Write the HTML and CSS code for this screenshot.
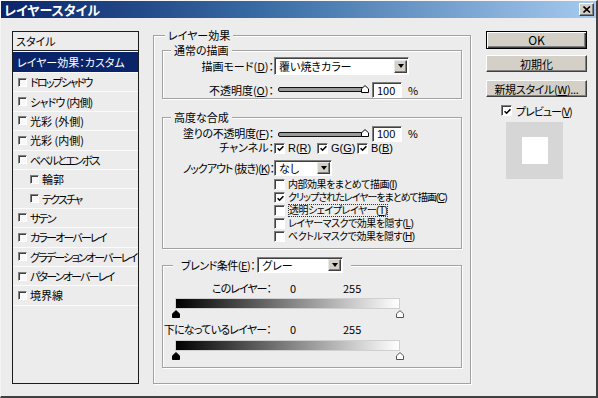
FILE: index.html
```html
<!DOCTYPE html>
<html lang="ja">
<head>
<meta charset="utf-8">
<title>レイヤースタイル</title>
<link rel="stylesheet" href="styles.css">
</head>
<body>
<div class="window">
  <div class="titlebar">
    <span class="title">レイヤースタイル</span>
    <span class="close"><svg width="8" height="7" viewBox="0 0 8 7"><path d="M0.5 0.5 L7 6.5 M7 0.5 L0.5 6.5" stroke="#000" stroke-width="1.6"/></svg></span>
  </div>
  <div class="main">
    <div class="stylelist">
      <div class="list-head">スタイル</div>
      <div class="item selected">レイヤー効果：カスタム</div>
      <div class="item"><span class="cb small"></span><span class="k2">ドロップシャドウ</span></div>
      <div class="item"><span class="cb small"></span><span class="k08">シャドウ (内側)</span></div>
      <div class="item"><span class="cb small"></span>光彩 (外側)</div>
      <div class="item"><span class="cb small"></span>光彩 (内側)</div>
      <div class="item"><span class="cb small"></span><span class="k2">ベベルとエンボス</span></div>
      <div class="item sub"><span class="cb small"></span>輪郭</div>
      <div class="item sub"><span class="cb small"></span><span class="k2">テクスチャ</span></div>
      <div class="item"><span class="cb small"></span><span class="k2">サテン</span></div>
      <div class="item"><span class="cb small"></span><span class="k2">カラーオーバーレイ</span></div>
      <div class="item"><span class="cb small"></span><span class="k2">グラデーションオーバーレイ</span></div>
      <div class="item"><span class="cb small"></span><span class="k2">パターンオーバーレイ</span></div>
      <div class="item last"><span class="cb small"></span>境界線</div>
    </div>

    <fieldset class="group outer">
      <legend>レイヤー効果</legend>

      <fieldset class="group inner g1">
        <legend>通常の描画</legend>
        <div class="row r-mode">
          <span class="lbl">描画モード(<u>D</u>)：</span>
          <div class="sel sel-mode"><span>覆い焼きカラー</span><span class="dd"><i></i></span></div>
        </div>
        <div class="row r-op">
          <span class="lbl">不透明度(<u>O</u>)：</span>
          <div class="slider"><span class="track"></span><svg class="thumb" width="8" height="8" viewBox="0 0 8 8"><path d="M0.5 7.5 V3.8 L4 0.6 L7.5 3.8 V7.5 Z" fill="#fff" stroke="#000"/></svg></div>
          <span class="num">100</span>
          <span class="pct">%</span>
        </div>
      </fieldset>

      <fieldset class="group inner g2">
        <legend>高度な合成</legend>
        <div class="row r-fill">
          <span class="lbl k03">塗りの不透明度(<u>F</u>)：</span>
          <div class="slider"><span class="track"></span><svg class="thumb" width="8" height="8" viewBox="0 0 8 8"><path d="M0.5 7.5 V3.8 L4 0.6 L7.5 3.8 V7.5 Z" fill="#fff" stroke="#000"/></svg></div>
          <span class="num">100</span>
          <span class="pct">%</span>
        </div>
        <div class="row r-ch">
          <span class="lbl">チャンネル：</span>
          <span class="chk c-r"><span class="cb on"><svg width="7" height="7" viewBox="0 0 7 7"><path d="M0.6 3.2 L2.6 5.2 L6.4 1.2" fill="none" stroke="#000" stroke-width="1.6"/></svg></span><span class="chtxt">R(<u>R</u>)</span></span>
          <span class="chk c-g"><span class="cb on"><svg width="7" height="7" viewBox="0 0 7 7"><path d="M0.6 3.2 L2.6 5.2 L6.4 1.2" fill="none" stroke="#000" stroke-width="1.6"/></svg></span><span class="chtxt">G(<u>G</u>)</span></span>
          <span class="chk c-b"><span class="cb on"><svg width="7" height="7" viewBox="0 0 7 7"><path d="M0.6 3.2 L2.6 5.2 L6.4 1.2" fill="none" stroke="#000" stroke-width="1.6"/></svg></span><span class="chtxt">B(<u>B</u>)</span></span>
        </div>
        <div class="row r-ko">
          <span class="lbl k1">ノックアウト (抜き)(<u>K</u>)：</span>
          <div class="sel sel-ko"><span>なし</span><span class="dd"><i></i></span></div>
        </div>
        <div class="checks">
          <div class="crow"><span class="cb"></span><span>内部効果をまとめて描画(<u>I</u>)</span></div>
          <div class="crow"><span class="cb on"><svg width="7" height="7" viewBox="0 0 7 7"><path d="M0.6 3.2 L2.6 5.2 L6.4 1.2" fill="none" stroke="#000" stroke-width="1.6"/></svg></span><span class="ct">クリップされたレイヤーをまとめて描画(<u>C</u>)</span></div>
          <div class="crow"><span class="cb"></span><span class="focus">透明シェイプレイヤー(<u>T</u>)</span></div>
          <div class="crow"><span class="cb"></span><span>レイヤーマスクで効果を隠す(<u>L</u>)</span></div>
          <div class="crow"><span class="cb"></span><span>ベクトルマスクで効果を隠す(<u>H</u>)</span></div>
        </div>
      </fieldset>

      <fieldset class="group inner g3">
        <legend><span class="blbl k05">ブレンド条件(<u>E</u>)：</span><span class="sel sel-blend"><span>グレー</span><span class="dd"><i></i></span></span></legend>
        <div class="row r-this">
          <span class="lbl2 k1">このレイヤー：</span>
          <span class="v0">0</span><span class="v255">255</span>
        </div>
        <div class="grad"></div>
        <div class="marks">
          <svg width="8" height="8" viewBox="0 0 8 8"><path d="M0.5 7.5 V3.8 L4 0.6 L7.5 3.8 V7.5 Z" fill="#000" stroke="#000"/></svg>
          <svg width="8" height="8" viewBox="0 0 8 8"><path d="M0.5 7.5 V3.8 L4 0.6 L7.5 3.8 V7.5 Z" fill="#fff" stroke="#555"/></svg>
        </div>
        <div class="row r-under">
          <span class="lbl2 k08">下になっているレイヤー：</span>
          <span class="v0">0</span><span class="v255">255</span>
        </div>
        <div class="grad"></div>
        <div class="marks">
          <svg width="8" height="8" viewBox="0 0 8 8"><path d="M0.5 7.5 V3.8 L4 0.6 L7.5 3.8 V7.5 Z" fill="#000" stroke="#000"/></svg>
          <svg width="8" height="8" viewBox="0 0 8 8"><path d="M0.5 7.5 V3.8 L4 0.6 L7.5 3.8 V7.5 Z" fill="#fff" stroke="#555"/></svg>
        </div>
      </fieldset>
    </fieldset>

    <div class="side">
      <div class="btn default">OK</div>
      <div class="btn b-reset">初期化</div>
      <div class="btn b-new"><span class="k03">新規スタイル(<u>W</u>)...</span></div>
      <div class="prev-row"><span class="cb on"><svg width="7" height="7" viewBox="0 0 7 7"><path d="M0.6 3.2 L2.6 5.2 L6.4 1.2" fill="none" stroke="#000" stroke-width="1.6"/></svg></span><span class="k1">プレビュー(<u>V</u>)</span></div>
      <div class="preview"><div class="swatch"></div></div>
    </div>
  </div>
</div>
</body>
</html>
```

FILE: styles.css
```css
* { box-sizing: border-box; }
html, body { margin: 0; padding: 0; }
body {
  width: 598px;
  height: 398px;
  overflow: hidden;
  background: #ececec;
  font-family: "Noto Sans CJK JP", "Noto Sans", sans-serif;
  font-size: 11px;
  line-height: 14px;
  font-feature-settings: "palt";
  color: #000;
}
u {
  display: inline-block;
  text-decoration: underline;
  text-underline-offset: 1px;
}

/* letter-spacing helpers to approximate the narrow UI font */
.k2 { letter-spacing: -1.8px; }
.k1 { letter-spacing: -1px; }
.k08 { letter-spacing: -0.8px; }
.k05 { letter-spacing: -0.5px; }
.k03 { letter-spacing: -0.3px; }

.window {
  width: 598px;
  height: 398px;
  background: #ececec;
  border-style: solid;
  border-width: 1px 2px 2px 1px;
  border-color: #f6f6f6 #404040 #404040 #f6f6f6;
  display: flex;
  flex-direction: column;
}

.titlebar {
  height: 17px;
  flex: none;
  background: linear-gradient(90deg, #0a246a 0%, #3a6ea5 45%, #a6caf0 100%);
  display: flex;
  align-items: center;
  justify-content: space-between;
  padding: 0 2px 0 3px;
}
.title {
  color: #fff;
  font-weight: bold;
  font-size: 13px;
}
.close {
  width: 15px;
  height: 13px;
  background: #d4d0c8;
  border: 1px solid;
  border-color: #fff #404040 #404040 #fff;
  box-shadow: inset -1px -1px 0 #808080;
  display: flex;
  align-items: center;
  justify-content: center;
}

.main {
  display: flex;
  align-items: flex-start;
  padding-left: 11px;
}

/* Style list */
.stylelist {
  width: 127px;
  height: 353px;
  margin-top: 13px;
  border: 1px solid #1c1c1c;
  background: #ececec;
  display: flex;
  flex-direction: column;
}
.list-head {
  height: 19px;
  border-bottom: 1px solid #222;
  padding-left: 3px;
  display: flex;
  align-items: center;
}
.item {
  height: 19.4px;
  border-top: 1px solid #fbfbfb;
  display: flex;
  align-items: center;
  padding-left: 5px;
  white-space: nowrap;
}
.item.selected {
  height: 21px;
  background: #0a246a;
  color: #fff;
  padding-left: 4px;
}
.item.sub { padding-left: 17px; }
.item.last { border-bottom: 1px solid #fbfbfb; height: 20.4px; }

.cb {
  width: 11px;
  height: 11px;
  flex: none;
  background: #fff;
  border: 1px solid;
  border-color: #808080 #fff #fff #808080;
  box-shadow: inset 1px 1px 0 #404040;
  display: inline-flex;
  align-items: center;
  justify-content: center;
}
.cb svg { margin: 1px 0 0 1px; }
.cb.small {
  width: 9px;
  height: 9px;
  margin-right: 3px;
  background: #f8f8f8;
}

/* Group boxes */
.group {
  margin: 0;
  min-width: 0;
  border: 1px solid #a2a2a2;
  box-shadow: inset 1px 1px 0 #fff, 1px 1px 0 #fff;
}
.group > legend {
  background: #ececec;
  line-height: 14px;
  padding: 0 3px;
}
.outer {
  width: 318px;
  height: 356px;
  margin: 10px 0 0 14px;
  padding: 0 8px;
}
.outer > legend { margin-left: 3px; }
.inner {
  width: 300px;
  padding: 0;
}
.inner > legend { margin-left: 8px; }

.g1 { margin-top: 1px; height: 56px; }
.g2 { margin-top: 11px; height: 139px; }
.g3 { margin-top: 8px; height: 111px; }

.row {
  display: flex;
  align-items: center;
  white-space: nowrap;
}
.lbl {
  width: 111px;
  text-align: right;
  flex: none;
}
.r-mode { height: 18px; }
.r-op { height: 15px; margin-top: 7px; }
.r-fill { height: 14px; margin-top: 3px; }
.r-ch { height: 14px; }
.r-ko { height: 15px; margin-top: 5px; }

/* Latin-first stack keeps the line boxes of these tightly stacked rows compact */
.r-fill, .r-ch {
  font-family: "Liberation Sans", "Noto Sans CJK JP", sans-serif;
}

.sel {
  height: 18px;
  background: #fff;
  border: 1px solid;
  border-color: #808080 #fff #fff #808080;
  box-shadow: inset 1px 1px 0 #404040;
  display: flex;
  align-items: center;
  justify-content: space-between;
  padding: 0 1px 0 4px;
  letter-spacing: 0;
}
.sel-mode { width: 135px; }
.sel-ko { width: 58px; height: 16px; }
.sel-blend { width: 86px; height: 16px; }
.dd {
  width: 13px;
  height: 13px;
  background: #d4d0c8;
  border: 1px solid;
  border-color: #e8e8e8 #404040 #404040 #e8e8e8;
  box-shadow: inset -1px -1px 0 #808080;
  display: flex;
  align-items: center;
  justify-content: center;
}
.sel-ko .dd, .sel-blend .dd { height: 12px; }
.dd i {
  width: 0;
  height: 0;
  border-left: 3.5px solid transparent;
  border-right: 3.5px solid transparent;
  border-top: 4px solid #000;
}

.slider {
  display: flex;
  align-items: center;
  margin-left: 4px;
}
.track {
  width: 86px;
  height: 5px;
  border: 1px solid #111;
  border-radius: 2px;
  background: #9a9a9a;
}
.thumb { margin-left: -3px; margin-top: -2px; }
.num {
  width: 30px;
  height: 16px;
  margin-left: 3px;
  background: #fff;
  border: 1px solid;
  border-color: #808080 #fff #fff #808080;
  box-shadow: inset 1px 1px 0 #404040;
  padding-left: 4px;
  display: flex;
  align-items: center;
}
.pct { margin-left: 6px; }

.chk {
  display: flex;
  align-items: center;
}
.chtxt { margin-left: 3px; }
.c-r { width: 43px; }
.c-g { width: 40px; }

.checks {
  margin-top: 3px;
  padding-left: 111px;
}
.crow {
  height: 13px;
  line-height: 13px;
  font-family: "Liberation Sans", "Noto Sans CJK JP", sans-serif;
  font-size: 10px;
  letter-spacing: -0.5px;
  display: flex;
  align-items: center;
  white-space: nowrap;
}
.crow .ct { letter-spacing: -1px; }
.crow .cb { margin-right: 3px; }
.focus {
  outline: 1px dotted #333;
  outline-offset: -1px;
  padding: 0 1px;
}

/* Blend */
.g3 > legend {
  margin-left: 10px;
  padding: 0 8px;
  display: flex;
  align-items: center;
}
.blbl { margin-right: 2px; }
.lbl2 {
  width: 108px;
  text-align: right;
  flex: none;
}
.r-this { height: 14px; margin-top: 8px; }
.r-under { height: 14px; margin-top: 4px; }
.v0 { margin-left: 19px; width: 53px; }
.grad {
  width: 225px;
  height: 11px;
  margin: 3px 0 0 12px;
  background: linear-gradient(90deg, #000 0%, #fff 100%);
  border: 1px solid #d0d0d0;
}
.r-under + .grad { margin-top: 4px; }
.marks {
  width: 232px;
  height: 8px;
  margin: 1px 0 0 9px;
  display: flex;
  justify-content: space-between;
}

/* Side column */
.side {
  width: 101px;
  margin: 13px 0 0 15px;
  display: flex;
  flex-direction: column;
}
.btn {
  height: 17px;
  background: #d4d0c8;
  border: 1px solid;
  border-color: #fff #404040 #404040 #fff;
  box-shadow: inset -1px -1px 0 #808080;
  display: flex;
  align-items: center;
  justify-content: center;
  white-space: nowrap;
}
.btn.default {
  height: 18px;
  border: 1px solid #000;
  box-shadow: inset 1px 1px 0 #fff, inset -1px -1px 0 #404040, inset -2px -2px 0 #808080;
  font-size: 12px;
}
.b-reset { margin-top: 6px; }
.b-new { margin-top: 8px; }
.prev-row {
  height: 13px;
  margin-top: 7px;
  padding-left: 15px;
  display: flex;
  align-items: center;
  white-space: nowrap;
}
.prev-row .cb { margin-right: 4px; }
.preview {
  width: 57px;
  height: 57px;
  margin: 5px 0 0 20px;
  background: #d6d6d6;
  display: flex;
  align-items: center;
  justify-content: center;
}
.swatch {
  width: 26px;
  height: 27px;
  background: #fff;
}
```
